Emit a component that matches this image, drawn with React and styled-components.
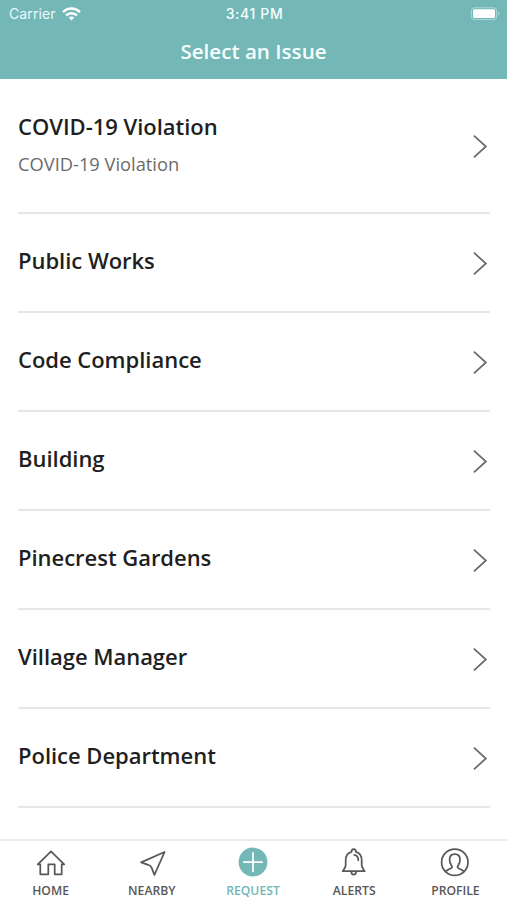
import React from "react";
import styled, { createGlobalStyle } from "styled-components";

const GlobalStyle = createGlobalStyle`
  *, *::before, *::after { box-sizing: border-box; }
  body {
    margin: 0;
    background: #fff;
    font-family: "Open Sans", "Noto Sans", sans-serif;
  }
`;

const Screen = styled.div`
  display: flex;
  flex-direction: column;
  width: 507px;
  height: 900px;
  overflow: hidden;
  background: #fff;
`;

const Header = styled.header`
  flex: none;
  height: 79px;
  background: #73b7b7;
  color: #f6ffff;
`;

const StatusBar = styled.div`
  display: grid;
  grid-template-columns: 1fr auto 1fr;
  align-items: center;
  height: 27px;
  padding: 0 7px 0 9px;
  font-family: Inter, "Liberation Sans", sans-serif;
  font-size: 14px;
  line-height: 26px;
`;

const Carrier = styled.div`
  display: flex;
  align-items: center;
  gap: 6px;
  color: #e9fafa;
  letter-spacing: 0.1px;
`;

const Clock = styled.div`
  font-size: 14px;
  font-weight: 500;
  letter-spacing: 0.65px;
`;

const BatterySlot = styled.div`
  display: flex;
  justify-content: flex-end;
`;

const Title = styled.h1`
  margin: 0;
  font-size: 20.6px;
  font-weight: 600;
  line-height: 48px;
  text-align: center;
  letter-spacing: 0;
`;

const IssueList = styled.ul`
  flex: 1;
  margin: 0;
  padding: 1px 17px 0 18px;
  list-style: none;
  overflow: hidden;
`;

const IssueRow = styled.li`
  display: flex;
  align-items: center;
  justify-content: space-between;
  height: ${(p) => (p.$tall ? 134 : 99)}px;
  padding: 0 2px 0 0;
  border-bottom: 2px solid #e7e7e7;
`;

const IssueText = styled.div`
  padding-bottom: 5px;
`;

const IssueName = styled.div`
  color: #1f1f1f;
  font-size: 22px;
  font-weight: 600;
  line-height: 30px;
  letter-spacing: -0.03px;
`;

const IssueDetail = styled.div`
  margin: 10px 0 -1px;
  color: #6b6b6b;
  font-size: 18.3px;
  line-height: 26px;
`;

const ChevronSlot = styled.div`
  display: flex;
  padding-top: ${(p) => (p.$raised ? 0 : 2)}px;
`;

const TabBar = styled.nav`
  display: flex;
  flex: none;
  height: 61px;
  padding-right: 1px;
  border-top: 2px solid #ebebeb;
`;

const Tab = styled.a`
  display: flex;
  flex: 1;
  flex-direction: column;
  align-items: center;
  padding-top: 6px;
  color: ${(p) => (p.$active ? "#73b7b7" : "#585858")};
`;

const TabLabel = styled.span`
  margin-top: 5px;
  font-size: 12.2px;
  font-weight: 600;
  line-height: 18px;
`;

const WifiIcon = () => (
  <svg width="19" height="14" viewBox="0 0 19 14" fill="none" stroke="#fff" strokeWidth="2.5">
    <path d="M1 5.1C5.8.4 13.2.4 18 5.1" />
    <path d="M4.1 8.4c3-3 7.8-3 10.8 0" />
    <path d="M9.5 13.4 6.7 10.6c1.6-1.5 4-1.5 5.6 0Z" fill="#fff" stroke="none" />
  </svg>
);

const BatteryIcon = () => (
  <svg width="30" height="14" viewBox="0 0 30 14">
    <rect x="1.4" y=".7" width="25.2" height="11.8" rx="3.4" fill="none" stroke="#a9d6d6" strokeWidth="1.1" />
    <rect x="3" y="2.2" width="22" height="8.8" rx="1.4" fill="#fff" />
    <path d="M28 4.4c1.6.7 1.6 3.5 0 4.2Z" fill="#a9d6d6" />
  </svg>
);

const Chevron = () => (
  <svg width="16" height="25" viewBox="0 0 16 25" fill="none" stroke="#686868" strokeWidth="1.7">
    <path d="M1.9 1.7 13.9 12.5 1.9 23.4" />
  </svg>
);

const iconProps = {
  width: 30,
  height: 30,
  viewBox: "0 0 30 30",
  fill: "none",
  stroke: "currentColor",
  strokeWidth: 1.75,
  strokeLinejoin: "round",
  strokeLinecap: "round",
};

const HomeIcon = () => (
  <svg {...iconProps}>
    <path d="M4.3 17.4H1.8L15 4.4l13.2 13h-2.5v9.9h-7v-9.9h-6.4v9.9h-8Z" />
  </svg>
);

const NearbyIcon = () => (
  <svg {...iconProps}>
    <path d="M4.1 15.4 27.6 5 17.4 27.9l-2.8-7.3c-.6-1.5-2-2.2-3.4-2.8Z" />
  </svg>
);

const RequestIcon = () => (
  <svg {...iconProps}>
    <circle cx="15" cy="15" r="14.4" fill="currentColor" stroke="none" />
    <path d="M15 5.9v18.4M5.8 15.1h18.4" stroke="#fff" />
  </svg>
);

const AlertsIcon = () => (
  <svg {...iconProps}>
    <path d="M12.5 4.9c0-3.7 4.4-3.7 4.4 0 4 1.1 5.8 4.2 5.8 8.4V18c0 2.5 1.5 4 3 6.2h-22c1.5-2.2 3-3.7 3-6.2v-4.7c0-4.2 1.8-7.3 5.8-8.4ZM12.3 24.5c0 4.2 4.8 4.2 4.8 0" />
    <path d="M15.3 7.9c2.7.4 4 2.2 4 5.3" />
  </svg>
);

const ProfileIcon = () => (
  <svg {...iconProps}>
    <g transform="translate(-.2 .5)">
      <circle cx="15" cy="14.7" r="13.2" />
      <path d="M5.8 23.8c2.7-1.8 5.2-2.8 6-3.5.9-.8.4-1.7-.3-2.6-1.2-1.6-1.7-3.2-1.7-5.8 0-3.4 1.8-5.4 5.2-5.4s5.2 2 5.2 5.4c0 2.6-.5 4.2-1.7 5.8-.7.9-1.2 1.8-.3 2.6.8.7 3.3 1.7 6 3.5" />
    </g>
  </svg>
);

const issues = [
  { name: "COVID-19 Violation", detail: "COVID-19 Violation" },
  { name: "Public Works" },
  { name: "Code Compliance" },
  { name: "Building" },
  { name: "Pinecrest Gardens" },
  { name: "Village Manager" },
  { name: "Police Department" },
];

const tabs = [
  { label: "HOME", Icon: HomeIcon },
  { label: "NEARBY", Icon: NearbyIcon },
  { label: "REQUEST", Icon: RequestIcon, active: true },
  { label: "ALERTS", Icon: AlertsIcon },
  { label: "PROFILE", Icon: ProfileIcon },
];

export default function App() {
  return (
    <>
      <GlobalStyle />
      <Screen>
        <Header>
          <StatusBar>
            <Carrier>
              Carrier
              <WifiIcon />
            </Carrier>
            <Clock>3:41 PM</Clock>
            <BatterySlot>
              <BatteryIcon />
            </BatterySlot>
          </StatusBar>
          <Title>Select an Issue</Title>
        </Header>
        <IssueList>
          {issues.map(({ name, detail }) => (
            <IssueRow key={name} $tall={Boolean(detail)}>
              <IssueText>
                <IssueName>{name}</IssueName>
                {detail && <IssueDetail>{detail}</IssueDetail>}
              </IssueText>
              <ChevronSlot $raised={Boolean(detail)}>
                <Chevron />
              </ChevronSlot>
            </IssueRow>
          ))}
        </IssueList>
        <TabBar>
          {tabs.map(({ label, Icon, active }) => (
            <Tab key={label} $active={active}>
              <Icon />
              <TabLabel>{label}</TabLabel>
            </Tab>
          ))}
        </TabBar>
      </Screen>
    </>
  );
}
